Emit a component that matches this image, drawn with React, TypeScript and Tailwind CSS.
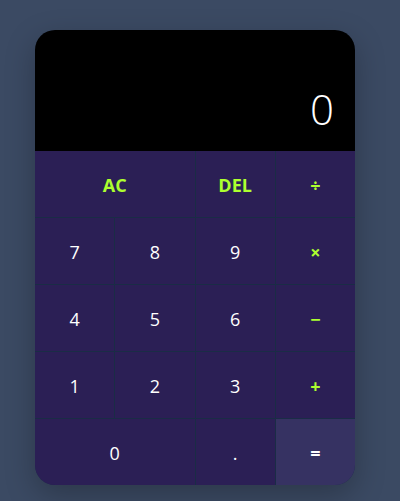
import React from "react";

export default function App() {
  const cell = "h-[66px] flex items-center justify-center bg-[#2b1f55] text-white text-[18px] pt-[3px]";
  const op = "h-[66px] flex items-center justify-center bg-[#2b1f55] text-[#adff2f] text-[18px] font-bold pt-[3px]";
  return (
    <div className="w-[400px] h-[501px] bg-[#3b4a63] pt-[30px] pl-[35px]" style={{ fontFamily: '"Open Sans", "Noto Sans", sans-serif' }}>
      <div className="w-[320px] rounded-[20px] overflow-hidden shadow-[0_10px_30px_rgba(0,0,0,0.25)]">
        <div className="h-[121px] bg-black flex items-end justify-end pr-[21px] pb-[21px]">
          <span className="text-white text-[42px] font-light leading-none">0</span>
        </div>
        <div className="grid grid-cols-4 gap-px bg-[#1a2c46]">
          <div className={op + " col-span-2"}>AC</div>
          <div className={op}>DEL</div>
          <div className={op}>÷</div>
          <div className={cell}>7</div>
          <div className={cell}>8</div>
          <div className={cell}>9</div>
          <div className={op}>×</div>
          <div className={cell}>4</div>
          <div className={cell}>5</div>
          <div className={cell}>6</div>
          <div className={op}>−</div>
          <div className={cell}>1</div>
          <div className={cell}>2</div>
          <div className={cell}>3</div>
          <div className={op}>+</div>
          <div className={cell + " col-span-2"}>0</div>
          <div className={cell}>.</div>
          <div className="h-[66px] flex items-center justify-center bg-[#363262] text-white text-[18px] font-bold pt-[3px]">=</div>
        </div>
      </div>
    </div>
  );
}
